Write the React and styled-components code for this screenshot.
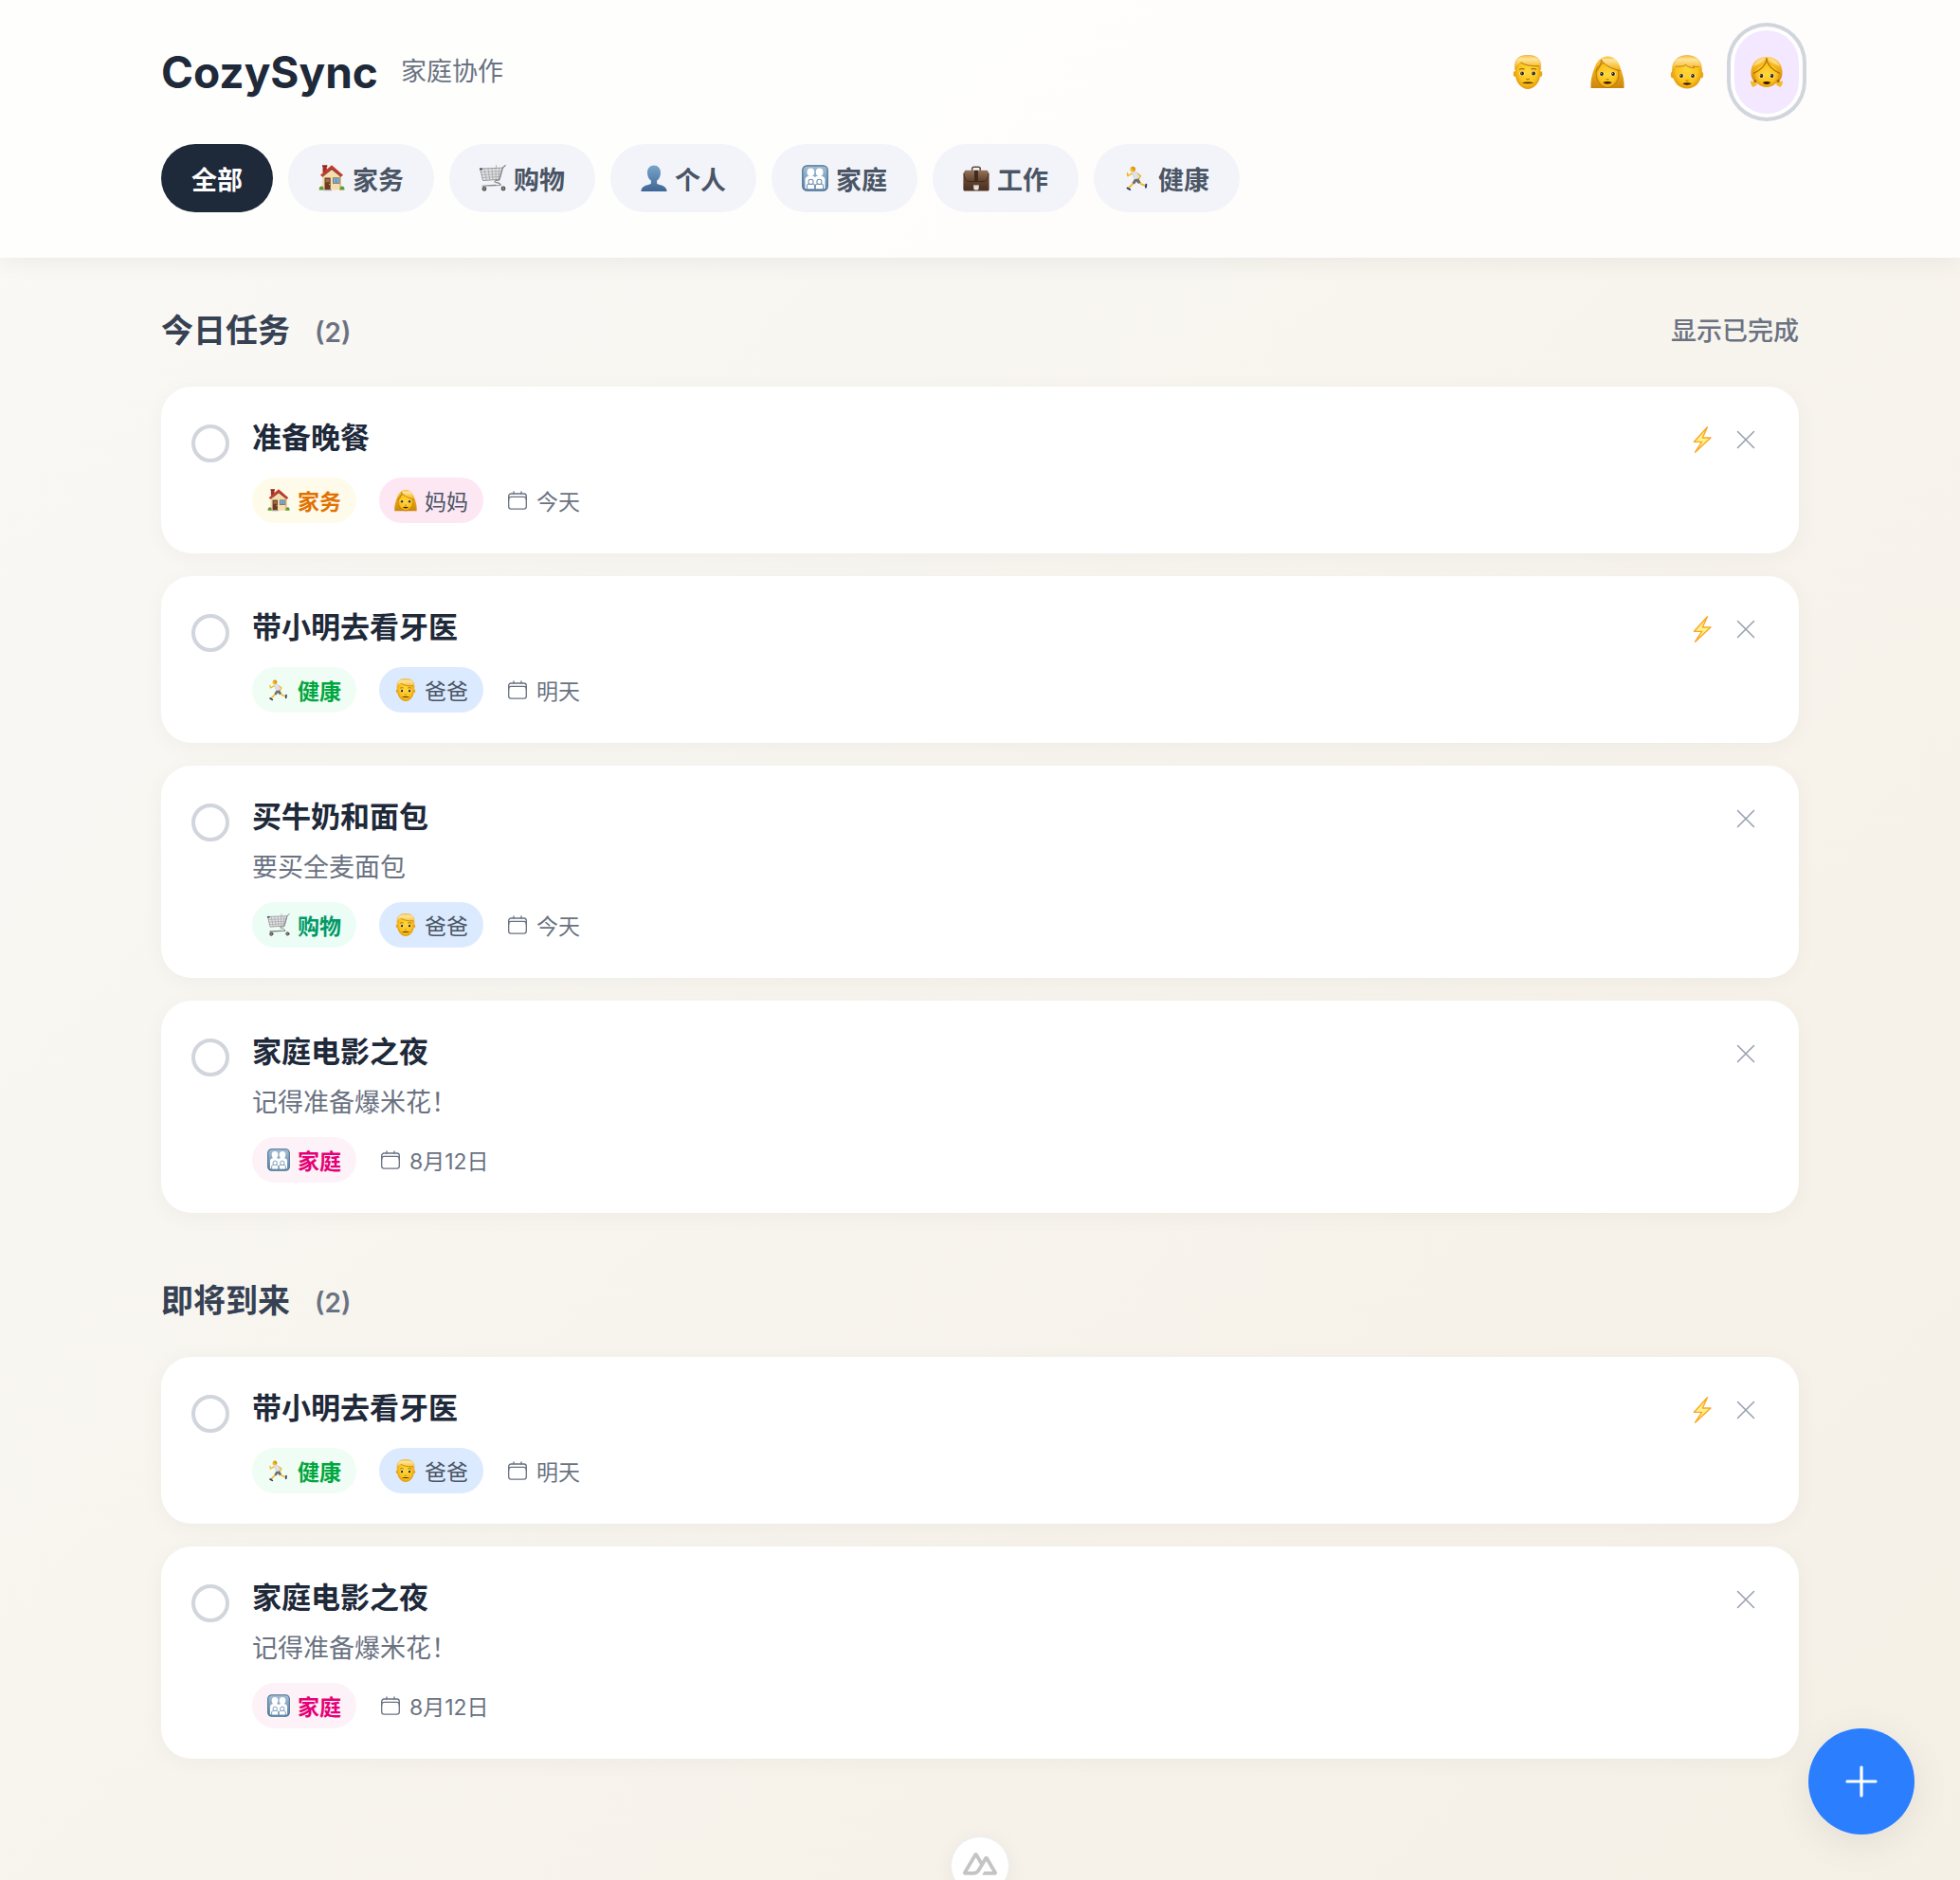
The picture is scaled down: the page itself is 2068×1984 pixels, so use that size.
import React, { useState } from 'react';
import styled, { createGlobalStyle } from 'styled-components';

const GlobalStyle = createGlobalStyle`
  * {
    box-sizing: border-box;
  }

  body {
    margin: 0;
    font-family: Inter, 'Noto Sans CJK SC', sans-serif;
    color: #1e2939;
    -webkit-font-smoothing: antialiased;
  }

  button {
    font-family: inherit;
    border: none;
    cursor: pointer;
  }

  h1, h2, h3, p, ul {
    margin: 0;
    padding: 0;
  }
`;

const Page = styled.div`
  min-height: 100vh;
  background: linear-gradient(135deg, #faf9f6 0%, #f5f0e6 100%);
`;

const Header = styled.header`
  background: rgba(255, 255, 255, 0.8);
  box-shadow: 0 4px 24px rgba(0, 0, 0, 0.06);
`;

const HeaderInner = styled.div`
  max-width: 1792px;
  margin: 0 auto;
  padding: 32px 32px 48px;
`;

const TopBar = styled.div`
  display: flex;
  align-items: center;
  justify-content: space-between;
  height: 88px;
  margin-bottom: 32px;
`;

const Brand = styled.div`
  display: flex;
  align-items: center;
  gap: 24px;
`;

const BrandName = styled.h1`
  font-size: 46px;
  line-height: 64px;
  font-weight: 700;
`;

const BrandNote = styled.span`
  font-size: 27px;
  line-height: 40px;
  color: #6a7282;
`;

const Avatars = styled.div`
  display: flex;
  gap: 16px;
`;

const Avatar = styled.button`
  display: flex;
  align-items: center;
  justify-content: center;
  padding: 24px 16px;
  height: 88px;
  border-radius: 34px;
  background: ${({ $active }) => ($active ? '#f3e8ff' : 'transparent')};
  box-shadow: ${({ $active }) => ($active ? '0 0 0 4px #ffffff, 0 0 0 8px #d1d5dc' : 'none')};
`;

const Filters = styled.nav`
  display: flex;
  flex-wrap: wrap;
  gap: 16px;
`;

const FilterButton = styled.button`
  display: flex;
  align-items: center;
  gap: 8px;
  height: 72px;
  padding: 0 32px;
  border-radius: 36px;
  font-size: 27px;
  font-weight: 600;
  color: ${({ $active }) => ($active ? '#ffffff' : '#4a5565')};
  background: ${({ $active }) => ($active ? '#1e2939' : '#f3f4f9')};
`;

const Main = styled.main`
  display: flex;
  flex-direction: column;
  gap: 64px;
  max-width: 1792px;
  margin: 0 auto;
  padding: 48px 32px 96px;
`;

const SectionHead = styled.div`
  display: flex;
  align-items: center;
  justify-content: space-between;
  height: 60px;
  margin-bottom: 28px;
`;

const SectionTitle = styled.h2`
  display: flex;
  align-items: baseline;
  gap: 26px;
  font-size: 34px;
  line-height: 60px;
  font-weight: 600;
  color: #364153;
`;

const Count = styled.span`
  font-size: 28px;
  font-weight: 600;
  color: #6a7282;
`;

const TextButton = styled.button`
  padding: 0;
  background: none;
  font-size: 27px;
  line-height: 40px;
  font-weight: 500;
  color: #6a7282;
`;

const TaskList = styled.ul`
  display: flex;
  flex-direction: column;
  gap: 24px;
  list-style: none;
`;

const TaskCard = styled.li`
  display: flex;
  align-items: flex-start;
  gap: 24px;
  padding: 32px;
  border-radius: 32px;
  background: #ffffff;
  box-shadow: 0 4px 24px rgba(0, 0, 0, 0.04);
`;

const Check = styled.input`
  appearance: none;
  flex: none;
  width: 40px;
  height: 40px;
  margin: 8px 0 0;
  border: 4px solid #d1d5dc;
  border-radius: 50%;
  background: #ffffff;
  cursor: pointer;

  &:checked {
    background: #00c950;
    border-color: #00c950;
  }
`;

const TaskBody = styled.div`
  flex: 1;
  min-width: 0;
`;

const TaskTitle = styled.label`
  display: block;
  padding-bottom: 4px;
  font-size: 31px;
  line-height: 44px;
  font-weight: 600;
`;

const TaskNote = styled.p`
  margin-top: 8px;
  font-size: 27px;
  line-height: 40px;
  color: #6a7282;
`;

const Meta = styled.div`
  display: flex;
  flex-wrap: wrap;
  align-items: center;
  gap: 24px;
  margin-top: 16px;
`;

const Tag = styled.span`
  display: flex;
  align-items: center;
  gap: 8px;
  height: 48px;
  padding: 0 16px;
  border-radius: 24px;
  font-size: 23px;
  font-weight: ${({ $strong }) => ($strong ? 600 : 400)};
  color: ${({ $color }) => $color};
  background: ${({ $bg }) => $bg};
`;

const DueDate = styled.span`
  display: flex;
  align-items: center;
  gap: 8px;
  font-size: 23px;
  color: #6a7282;
`;

const Actions = styled.div`
  display: flex;
  align-items: center;
  gap: 8px;
`;

const RemoveButton = styled.button`
  display: flex;
  align-items: center;
  justify-content: center;
  width: 48px;
  height: 48px;
  padding: 0;
  background: none;
  color: #99a1af;
`;

const AddButton = styled.button`
  position: fixed;
  right: 48px;
  bottom: 48px;
  display: flex;
  align-items: center;
  justify-content: center;
  width: 112px;
  height: 112px;
  padding: 0;
  border-radius: 50%;
  color: #ffffff;
  background: #2b7fff;
  box-shadow: 0 8px 40px rgba(0, 0, 0, 0.08);
`;

const DevBadge = styled.button`
  position: fixed;
  left: 50%;
  bottom: -16px;
  transform: translateX(-50%);
  display: flex;
  align-items: flex-start;
  justify-content: center;
  width: 62px;
  height: 62px;
  padding: 10px 0 0;
  border: 1px solid #eceef0;
  border-radius: 50%;
  color: #c4c4c4;
  background: #ffffff;
  box-shadow: 0 4px 24px rgba(0, 0, 0, 0.06);
`;

function Gradients() {
  return (
    <svg width="0" height="0" style={{ display: 'block' }} aria-hidden="true">
      <defs>
        <radialGradient id="skin" cx="0.5" cy="0.45" r="0.6">
          <stop offset="0" stopColor="#ffd83a" />
          <stop offset="0.65" stopColor="#fcc21b" />
          <stop offset="1" stopColor="#d98d09" />
        </radialGradient>
        <linearGradient id="hair" x1="0" y1="0" x2="0" y2="1">
          <stop offset="0" stopColor="#fdcf55" />
          <stop offset="0.35" stopColor="#f5b421" />
          <stop offset="1" stopColor="#cc840b" />
        </linearGradient>
        <linearGradient id="shine" x1="0" y1="0" x2="0" y2="1">
          <stop offset="0" stopColor="#f6bd3d" />
          <stop offset="0.25" stopColor="#ffe59a" />
          <stop offset="0.8" stopColor="#f8ba2b" />
        </linearGradient>
        <linearGradient id="bust" x1="0" y1="0" x2="0" y2="1">
          <stop offset="0" stopColor="#78a5cb" />
          <stop offset="1" stopColor="#3f6694" />
        </linearGradient>
        <linearGradient id="plate" x1="0" y1="0" x2="0" y2="1">
          <stop offset="0" stopColor="#a4bfd4" />
          <stop offset="1" stopColor="#5d87aa" />
        </linearGradient>
        <linearGradient id="leather" x1="0" y1="0" x2="0" y2="1">
          <stop offset="0" stopColor="#94725b" />
          <stop offset="0.5" stopColor="#63432f" />
          <stop offset="1" stopColor="#49301f" />
        </linearGradient>
      </defs>
    </svg>
  );
}

function Eyes({ y = 19, gap = 6 }) {
  return (
    <g>
      <ellipse cx={18 - gap} cy={y} rx="2.7" ry="2.2" fill="#fff3c4" />
      <ellipse cx={18 + gap} cy={y} rx="2.7" ry="2.2" fill="#fff3c4" />
      <circle cx={18 - gap} cy={y} r="1.9" fill="#2b1a08" />
      <circle cx={18 + gap} cy={y} r="1.9" fill="#2b1a08" />
      <circle cx={17.4 - gap} cy={y - 0.6} r="0.5" fill="#fff" />
      <circle cx={17.4 + gap} cy={y - 0.6} r="0.5" fill="#fff" />
    </g>
  );
}

const drawings = {
  man: (
    <g>
      <ellipse cx="4.6" cy="20" rx="1.9" ry="3" fill="#eba51b" />
      <ellipse cx="31.4" cy="20" rx="1.9" ry="3" fill="#eba51b" />
      <path d="M5 12C5 5 10 1 18 1s13 4 13 11v9c0 8-6.500 15-13 15S5 29 5 21z" fill="url(#skin)" />
      <path d="M4.500 16C3 5 8 .300 18 .300S33 5 31.500 16c-.6-2-1-3.400-1.500-4.500-7 .8-14-.4-19.500-3.500C7.500 10 5.800 12 4.500 16z" fill="url(#shine)" stroke="#dd9d22" strokeWidth="0.500" />
      <path d="M10.500 8c5.500 3.100 12.500 4.300 19.500 3.500" fill="none" stroke="#b87808" strokeWidth="0.9" />
      <path d="M9.500 15.200c1.500-.9 3-.9 4.500-.3M22 14.900c1.500-.6 3-.6 4.500.3" fill="none" stroke="#9b6107" strokeWidth="1.200" strokeLinecap="round" />
      <Eyes y={19.5} />
      <path d="M16.200 25.300c1.200.8 2.400.8 3.600 0" fill="none" stroke="#c07c0a" strokeWidth="1.300" />
      <path d="M12 29.200c2.500-1 9.500-1 12 0-2 1.300-10 1.300-12 0z" fill="#4c2908" />
    </g>
  ),
  woman: (
    <g>
      <path d="M.5 35C0 28 1.500 20 5 12 8 5 12 1.500 18 1.500S28.500 5 31 12c3.500 8 5 16 4.500 23z" fill="url(#hair)" />
      <path d="M6 19C6 12 11 8 18 8s12 4 12 12c0 8-6 14.500-12 14.500S6 28 6 19z" fill="url(#skin)" stroke="#a76b06" strokeWidth="0.7" />
      <path d="M11.500 5C14 10 22 15 31.500 16.500 31 8 26 2 19 1.700 15.500 1.500 13 2.500 11.500 5z" fill="url(#shine)" />
      <path d="M11.500 5C14 10 22 15 31.500 16.500M11.500 5C11.500 10 9 15 5.500 18" fill="none" stroke="#a76b06" strokeWidth="0.9" />
      <Eyes y={20} />
      <path d="M16.500 25.500c1 .6 2 .6 3 0" fill="none" stroke="#c07c0a" strokeWidth="1.200" />
      <path d="M13.500 29c2-1.300 7-1.300 9 0-1.200 2.200-7.800 2.200-9 0z" fill="#3a1d05" />
    </g>
  ),
  boy: (
    <g>
      <ellipse cx="3" cy="21" rx="2.200" ry="3.500" fill="#eba51b" />
      <ellipse cx="33" cy="21" rx="2.200" ry="3.500" fill="#eba51b" />
      <path d="M3 16C3 7 9 1 18 1s15 6 15 15v4c0 9-7 15.500-15 15.500S3 29 3 20z" fill="url(#skin)" />
      <path d="M2.500 18C1.500 7 8 .500 18 .500S34.500 7 33.500 18c-1-2.500-1.800-4.500-3-6-2 .8-4 .6-6-.3.500 1 .6 1.300 1.200 2-3.500 0-6.500-1-9-3.200-3 1.700-7 2-10.700 1.500C4.500 13.500 3.300 15.500 2.500 18z" fill="url(#shine)" stroke="#dd9d22" strokeWidth="0.500" />
      <path d="M6 12c3.700.5 7.700.2 10.700-1.500 2.500 2.200 5.500 3.200 9 3.200-.6-.7-.7-1-1.200-2 2 .9 4 1.100 6 .3" fill="none" stroke="#c07c0a" strokeWidth="0.8" />
      <Eyes y={22} />
      <path d="M16.500 26.800c1 .6 2 .6 3 0" fill="none" stroke="#c07c0a" strokeWidth="1.200" />
      <path d="M13.500 30c2-1 7-1 9 0-1.200 2.200-7.800 2.200-9 0z" fill="#3a1d05" />
    </g>
  ),
  girl: (
    <g>
      <path d="M6.500 28c-2 .8-4-.5-5.500-.5C1 30 2 33 4 34c1-1 3.500-2 4-3zM29.500 28c2 .8 4-.5 5.500-.5 0 2.500-1 5.500-3 6.500-1-1-3.500-2-4-3z" fill="#f7b924" />
      <path d="M1.500 21C.5 9 8 2 18 2s17.500 7 16.500 19c-.5 4-3 7-6 8.500h-21C4.500 28 2 25 1.500 21z" fill="url(#hair)" />
      <path d="M5 21C5 13 12 9 18 8c6 1 13 5 13 13s-6 13-13 13S5 29 5 21z" fill="url(#skin)" />
      <path d="M18 3C18 11 10 17 4 19.500M18 3c0 8 8 14 14 16.500" fill="none" stroke="#a76b06" strokeWidth="1.100" />
      <path d="M16.500 3.300C10 3.500 6 7 4 12c5-1.500 10-4 12.500-8.700zM19.500 3.300C26 3.500 30 7 32 12c-5-1.500-10-4-12.500-8.700z" fill="#ffe9a8" opacity="0.6" />
      <circle cx="5.800" cy="27.500" r="1.500" fill="#a76b06" />
      <circle cx="30.200" cy="27.500" r="1.500" fill="#a76b06" />
      <Eyes y={22} gap={5.5} />
      <path d="M14 29c2-1.300 6-1.300 8 0-1 2.800-7 2.800-8 0z" fill="#3a1d05" />
    </g>
  ),
  house: (
    <g transform="scale(1.286)">
      <path d="M4.500 8V1h4.300v7z" fill="#a6301f" />
      <path d="M4 .3h5.300v1.500H4z" fill="#7d2418" />
      <path d="M4 26.500V10.500L14 2l10 8.500v16z" fill="#f5ddb0" />
      <path d="M14 2l10 8.500v16h-2V12z" fill="#e3bf86" />
      <path d="M14 .2L26 10.800l-1.500 1.500L14 3.600 3.500 12.300 2 10.800z" fill="#c9352a" />
      <path d="M14 3.600l10 8.300v1L14 5 4 12.900v-1z" fill="#66251c" />
      <path d="M6.500 13.500h6.200v13H6.500z" fill="#6c3a22" />
      <path d="M7.500 14.800h4.200v3.600H7.500z" fill="#9f6a48" />
      <circle cx="11.600" cy="20.500" r="0.600" fill="#f4c95d" />
      <path d="M15 13.300h7.500v6.500H15z" fill="#8c6b4b" />
      <path d="M15.800 14h2.600v5h-2.600zM19.100 14h2.600v5h-2.600z" fill="#67b4ec" />
      <path d="M5.500 26h8.500v1.200H5.500z" fill="#a8a8a8" />
      <path d="M.8 26.500c-.5-2.500 1-4 2.600-4s2.400 1.800 2 4zM22.800 26.500c-.4-2.200.6-4 2.200-4s3 1.500 2.300 4z" fill="#5f9c36" />
    </g>
  ),
  cart: (
    <g transform="scale(1.286)" fill="none" strokeLinecap="round" strokeLinejoin="round">
      <path d="M.8 4.500L3.500 16.500 21 15.200 24.300 3.500z" fill="#e3e3e5" stroke="#8d8d90" strokeWidth="0.9" />
      <path d="M1.600 7.500l21.700-.9M2.300 10.500l20.200-.9M3 13.500l18.700-1.100M5 4.500l2.300 11.700M9 4.200l1.700 11.800M13 4l1 11.700M17 3.800l.2 11.700M20.800 3.700l-.8 11.600M17.500 3.800V.500" stroke="#9c9ca0" strokeWidth="0.7" />
      <path d="M27.200.5L24.500 3 20.800 16c-2.500 1-5-.2-5 1.500s6.200.5 6.400 4L3 22.300l13.500-1" stroke="#828286" strokeWidth="1.100" />
      <path d="M.3 4.300h2" stroke="#31475f" strokeWidth="1.800" />
      <circle cx="5" cy="25.300" r="1.900" fill="#8d8178" stroke="#4b4643" strokeWidth="1" />
      <circle cx="25" cy="25" r="1.900" fill="#8d8178" stroke="#4b4643" strokeWidth="1" />
    </g>
  ),
  person: (
    <path d="M18 .5c-5.300 0-9 4-9 10 0 4.600 2 8.700 5 10.800v4C12.500 27.800.5 26.500.5 36h35c0-9.500-12-8.200-13.500-10.700v-4c3-2.100 5-6.200 5-10.800 0-6-3.700-10-9-10z" fill="url(#bust)" />
  ),
  family: (
    <g>
      <rect x="1" y="1" width="34" height="34" rx="6" fill="url(#plate)" stroke="#4c6f8e" strokeWidth="1.600" />
      <g fill="#ffffff">
        <ellipse cx="12" cy="10" rx="5" ry="5.500" />
        <ellipse cx="24" cy="10" rx="5" ry="5.500" />
        <path d="M4.500 32V20c0-3 2-4.500 5-5h5c2 .3 3 1 3.500 2 .5-1 1.500-1.700 3.500-2h5c3 .5 5 2 5 5v12z" />
      </g>
      <g fill="#ffffff" stroke="#6c91b1" strokeWidth="1.300">
        <path d="M7 33v-4.500c0-2 2-3 5.300-3s5.200 1 5.200 3V33zM18.500 33v-4.500c0-2 2-3 5.200-3s5.300 1 5.300 3V33z" />
        <circle cx="12.300" cy="23" r="3.300" />
        <circle cx="23.700" cy="23" r="3.300" />
      </g>
    </g>
  ),
  briefcase: (
    <g>
      <path d="M12.500 8V5.500c0-1.500 1-2.500 2.500-2.500h6c1.500 0 2.500 1 2.500 2.500V8" fill="none" stroke="#654c3c" strokeWidth="2" />
      <path d="M3 7.500h30l2.500 4V33c0 1.500-1 2.500-2.500 2.500H3C1.500 35.500.5 34.500.5 33V11.500z" fill="url(#leather)" />
      <path d="M1.500 12C2 19 4 22.500 9 22.500h18c5 0 7-3.500 7.500-10.500" fill="none" stroke="#38251a" strokeWidth="1.100" />
      <path d="M15.500 7.500h5V22h-5z" fill="#3f2a1d" />
      <path d="M14.500 27h7v4.500c0 1.500-1 2.500-2 2.500h-3c-1 0-2-1-2-2.500z" fill="#e7e5e1" />
      <path d="M14.500 27h7v1.500h-7z" fill="#aaa49d" />
    </g>
  ),
  runner: (
    <g fill="none" strokeLinecap="round" strokeLinejoin="round">
      <path d="M11.500 11.500L5 15l-.5-4" stroke="#f6b51e" strokeWidth="1.900" />
      <path d="M15 20.500l-3 5-6.500 6.500M19 20l4 6 6.500 2.500" stroke="#f6b51e" strokeWidth="2.400" />
      <path d="M18.500 12l4 3-2.500 4" stroke="#f6b51e" strokeWidth="1.900" />
      <path d="M10.500 10.500c2-1.500 5-1.700 7.200-.3 1.700 2.200 2.200 6 1.600 9.300l-5.300.6c-.3-4-2.200-5.500-3.500-9.600z" fill="#e0e1e6" stroke="#bfc1c9" strokeWidth="0.600" />
      <path d="M14 19.500l5.500-.7 3 5-3.200 2-2.600-3.300-2.500 3.800-3.200-2z" fill="#6c6e76" />
      <circle cx="11.500" cy="6" r="3.300" fill="#f9b91f" />
      <path d="M9.500 3c2-1.500 5-1 6 1.500.5 2-.5 4-2 4.500-.7-2-2.300-3.500-4-6z" fill="#dd9910" />
      <path d="M4.500 31.500l3.500 2M30 26.500l-.5 4" stroke="#27356f" strokeWidth="2.400" />
    </g>
  ),
  bolt: (
    <path d="M25 1L7 21h10.500L8.500 35 29.500 15.500h-11z" fill="#fff08a" stroke="#f9a825" strokeWidth="1.800" strokeLinejoin="round" />
  ),
};

function Emoji({ name, size }) {
  return (
    <svg width={size} height={size} viewBox="0 0 36 36" aria-hidden="true">
      {drawings[name]}
    </svg>
  );
}

function CalendarIcon() {
  return (
    <svg width="24" height="24" viewBox="0 0 24 24" fill="none" stroke="currentColor" strokeWidth="1.300" strokeLinecap="round" aria-hidden="true">
      <rect x="2.700" y="5" width="18.600" height="16.200" rx="2.600" />
      <path d="M2.700 11.500V10.500c0-1.400 1-2.200 2.600-2.200h13.400c1.600 0 2.600.8 2.600 2.200v1M8 2.800V5M16 2.800V5" />
    </svg>
  );
}

function CloseIcon() {
  return (
    <svg width="28" height="28" viewBox="0 0 28 28" fill="none" stroke="currentColor" strokeWidth="1.600" strokeLinecap="round" aria-hidden="true">
      <path d="M5.500 5.500l17 17M22.500 5.500l-17 17" />
    </svg>
  );
}

function PlusIcon() {
  return (
    <svg width="40" height="40" viewBox="0 0 40 40" fill="none" stroke="currentColor" strokeWidth="3.200" strokeLinecap="round" aria-hidden="true">
      <path d="M20 5v30M5 20h30" />
    </svg>
  );
}

function MountainLogo() {
  return (
    <svg width="36" height="36" viewBox="0 0 24 24" fill="currentColor" aria-hidden="true">
      <path d="M13.464 19.830h8.922c.283 0 .562-.073.807-.210a1.590 1.590 0 0 0 .591-.574 1.530 1.530 0 0 0 .216-.783 1.530 1.530 0 0 0-.217-.782L17.792 7.414a1.590 1.590 0 0 0-.591-.573 1.650 1.650 0 0 0-.807-.210c-.283 0-.562.073-.807.210a1.590 1.590 0 0 0-.590.573L13.463 9.990 10.470 4.953a1.590 1.590 0 0 0-.591-.573 1.650 1.650 0 0 0-.807-.210c-.284 0-.562.073-.807.210a1.590 1.590 0 0 0-.591.573L.216 17.481a1.530 1.530 0 0 0-.217.782c0 .275.074.545.216.783a1.590 1.590 0 0 0 .590.574c.246.137.525.210.808.210h5.600c2.220 0 3.856-.946 4.982-2.790l2.733-4.593 1.464-2.457 4.395 7.382h-5.859Zm-6.341-2.460-3.908-.002 5.858-9.842 2.923 4.921-1.957 3.290c-.748 1.196-1.597 1.632-2.916 1.632z" />
    </svg>
  );
}

const categories = {
  chores: { icon: 'house', label: '家务', color: '#e17100', bg: '#fffbeb' },
  shopping: { icon: 'cart', label: '购物', color: '#009966', bg: '#ecfdf5' },
  personal: { icon: 'person', label: '个人' },
  family: { icon: 'family', label: '家庭', color: '#e60076', bg: '#fdf2f8' },
  work: { icon: 'briefcase', label: '工作' },
  health: { icon: 'runner', label: '健康', color: '#00a63e', bg: '#f0fdf4' },
};

const members = {
  dad: { icon: 'man', label: '爸爸', bg: '#dbeafe' },
  mom: { icon: 'woman', label: '妈妈', bg: '#fce7f3' },
  son: { icon: 'boy', label: '儿子' },
  daughter: { icon: 'girl', label: '女儿' },
};

const dinner = { id: 'dinner', title: '准备晚餐', category: 'chores', member: 'mom', due: '今天', urgent: true };
const dentist = { id: 'dentist', title: '带小明去看牙医', category: 'health', member: 'dad', due: '明天', urgent: true };
const groceries = { id: 'groceries', title: '买牛奶和面包', note: '要买全麦面包', category: 'shopping', member: 'dad', due: '今天' };
const movie = { id: 'movie', title: '家庭电影之夜', note: '记得准备爆米花！', category: 'family', due: '8月12日' };

function Task({ task, section }) {
  const category = categories[task.category];
  const member = members[task.member];
  const id = `${section}-${task.id}`;

  return (
    <TaskCard>
      <Check type="checkbox" id={id} />
      <TaskBody>
        <TaskTitle htmlFor={id}>{task.title}</TaskTitle>
        {task.note && <TaskNote>{task.note}</TaskNote>}
        <Meta>
          <Tag $strong $color={category.color} $bg={category.bg}>
            <Emoji name={category.icon} size={24} />
            {category.label}
          </Tag>
          {member && (
            <Tag $color="#4a5565" $bg={member.bg}>
              <Emoji name={member.icon} size={24} />
              {member.label}
            </Tag>
          )}
          <DueDate>
            <CalendarIcon />
            {task.due}
          </DueDate>
        </Meta>
      </TaskBody>
      <Actions>
        {task.urgent && <Emoji name="bolt" size={28} />}
        <RemoveButton type="button" aria-label="删除">
          <CloseIcon />
        </RemoveButton>
      </Actions>
    </TaskCard>
  );
}

function TaskSection({ id, title, count, tasks, action }) {
  return (
    <section>
      <SectionHead>
        <SectionTitle>
          {title}
          <Count>({count})</Count>
        </SectionTitle>
        {action}
      </SectionHead>
      <TaskList>
        {tasks.map((task) => (
          <Task key={task.id} task={task} section={id} />
        ))}
      </TaskList>
    </section>
  );
}

function App() {
  const [filter, setFilter] = useState('all');
  const [member, setMember] = useState('daughter');
  const visible = (tasks) => tasks.filter((task) => filter === 'all' || task.category === filter);

  return (
    <Page>
      <GlobalStyle />
      <Gradients />
      <Header>
        <HeaderInner>
          <TopBar>
            <Brand>
              <BrandName>CozySync</BrandName>
              <BrandNote>家庭协作</BrandNote>
            </Brand>
            <Avatars>
              {Object.entries(members).map(([key, item]) => (
                <Avatar
                  key={key}
                  type="button"
                  aria-label={item.label}
                  $active={member === key}
                  onClick={() => setMember(key)}
                >
                  <Emoji name={item.icon} size={36} />
                </Avatar>
              ))}
            </Avatars>
          </TopBar>
          <Filters>
            <FilterButton type="button" $active={filter === 'all'} onClick={() => setFilter('all')}>
              全部
            </FilterButton>
            {Object.entries(categories).map(([key, item]) => (
              <FilterButton key={key} type="button" $active={filter === key} onClick={() => setFilter(key)}>
                <Emoji name={item.icon} size={28} />
                {item.label}
              </FilterButton>
            ))}
          </Filters>
        </HeaderInner>
      </Header>
      <Main>
        <TaskSection
          id="today"
          title="今日任务"
          count={2}
          tasks={visible([dinner, dentist, groceries, movie])}
          action={<TextButton type="button">显示已完成</TextButton>}
        />
        <TaskSection id="upcoming" title="即将到来" count={2} tasks={visible([dentist, movie])} />
      </Main>
      <AddButton type="button" aria-label="添加任务">
        <PlusIcon />
      </AddButton>
      <DevBadge type="button" aria-label="开发工具">
        <MountainLogo />
      </DevBadge>
    </Page>
  );
}

export default App;
